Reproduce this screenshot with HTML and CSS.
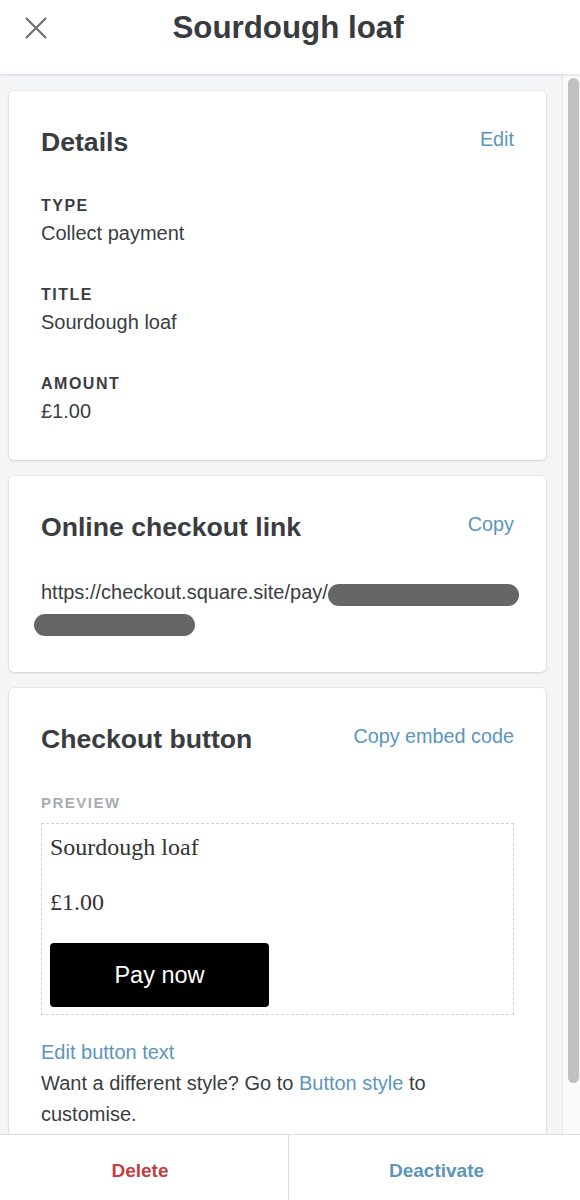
FILE: index.html
```html
<!DOCTYPE html>
<html lang="en">
<head>
<meta charset="utf-8">
<title>Sourdough loaf</title>
<link rel="stylesheet" href="styles.css">
</head>
<body>
<div class="app">
  <header class="topbar">
    <div class="topbar-side">
      <button class="close" aria-label="Close">
        <svg width="22" height="22" viewBox="0 0 22 22" aria-hidden="true">
          <path d="M1 1 L21 21 M21 1 L1 21" fill="none" stroke="#6f6f6f" stroke-width="2.2"/>
        </svg>
      </button>
    </div>
    <h1 class="title">Sourdough loaf</h1>
    <div class="topbar-side"></div>
  </header>

  <div class="viewport">
    <main class="content">
      <section class="card">
        <div class="card-head">
          <h2 class="card-title">Details</h2>
          <a class="link head-link">Edit</a>
        </div>
        <dl class="fields">
          <div class="field"><dt>Type</dt><dd>Collect payment</dd></div>
          <div class="field"><dt>Title</dt><dd>Sourdough loaf</dd></div>
          <div class="field"><dt>Amount</dt><dd>£1.00</dd></div>
        </dl>
      </section>

      <section class="card">
        <div class="card-head">
          <h2 class="card-title">Online checkout link</h2>
          <a class="link head-link">Copy</a>
        </div>
        <p class="url">
          <span class="url-line">https://checkout.square.site/pay/<span class="redact redact-a"></span></span>
          <span class="url-line"><span class="redact redact-b"></span></span>
        </p>
      </section>

      <section class="card">
        <div class="card-head">
          <h2 class="card-title">Checkout button</h2>
          <a class="link head-link">Copy embed code</a>
        </div>
        <div class="preview-label">Preview</div>
        <div class="preview">
          <div class="preview-name">Sourdough loaf</div>
          <div class="preview-price">£1.00</div>
          <button class="pay">Pay now</button>
        </div>
        <a class="link edit-text">Edit button text</a>
        <p class="hint"><span>Want a different style? Go to </span><a class="link">Button style</a><span> to customise.</span></p>
      </section>
    </main>
    <div class="scrollbar"><div class="thumb"></div></div>
  </div>

  <footer class="actions">
    <button class="action danger">Delete</button>
    <button class="action">Deactivate</button>
  </footer>
</div>
</body>
</html>
```

FILE: styles.css
```css
* { box-sizing: border-box; }

html, body {
  margin: 0;
  padding: 0;
  background: #ffffff;
}

body {
  font-family: "Liberation Sans", Arial, sans-serif;
  color: #393c40;
}

.app {
  width: 580px;
  height: 1200px;
  display: flex;
  flex-direction: column;
  overflow: hidden;
}

/* Header */
.topbar {
  flex: none;
  height: 74px;
  display: grid;
  grid-template-columns: 1fr auto 1fr;
  align-items: start;
  padding: 8px 4px 0 0;
  background: #ffffff;
  box-shadow: 0 1px 3px rgba(0, 0, 0, 0.14);
  position: relative;
  z-index: 2;
}

.close {
  margin: 9px 0 0 25px;
  padding: 0;
  border: none;
  background: none;
  width: 22px;
  height: 22px;
  display: block;
}

.close svg { display: block; }

.title {
  margin: 0;
  font-size: 31.3px;
  line-height: 40px;
  font-weight: 700;
  color: #383b3f;
}

/* Scroll region */
.viewport {
  flex: 1;
  display: flex;
  min-height: 0;
  background: #f4f5f7;
}

.content {
  flex: 1;
  min-width: 0;
  overflow: hidden;
  padding: 17px 16px 0 9px;
  display: flex;
  flex-direction: column;
  gap: 16px;
}

.scrollbar {
  flex: none;
  width: 18px;
  border-left: 1px solid #e4e5e7;
  background: #fafafa;
  padding: 4px 1px 0 5px;
}

.thumb {
  width: 11px;
  height: 1005px;
  border-radius: 6px;
  background: #c1c1c1;
}

/* Cards */
.card {
  flex: none;
  background: #ffffff;
  border-radius: 5px;
  box-shadow: 0 1px 3px rgba(0, 0, 0, 0.13), 0 0 0 1px rgba(0, 0, 0, 0.03);
  padding: 35px 32px 35px 32px;
}

.card-head {
  display: flex;
  justify-content: space-between;
  align-items: flex-start;
}

.card-title {
  margin: 0;
  font-size: 26.6px;
  line-height: 32px;
  font-weight: 700;
  color: #393c40;
}

.link {
  color: #5b95bd;
  text-decoration: none;
}

.head-link {
  font-size: 19.8px;
  line-height: 24px;
  margin-top: 1px;
}

/* Details fields */
.fields {
  margin: 38px 0 0 0;
  display: flex;
  flex-direction: column;
  gap: 38px;
}

.field dt {
  font-size: 16px;
  line-height: 20px;
  font-weight: 700;
  letter-spacing: 1.5px;
  text-transform: uppercase;
  color: #3a3d41;
  margin-bottom: 3px;
}

.field dd {
  margin: 0;
  font-size: 20px;
  line-height: 28px;
  color: #3a3d41;
}

/* Checkout link */
.url {
  margin: 34px 0 0 0;
  font-size: 20px;
  line-height: 30px;
  color: #3a3d41;
}

.url-line {
  display: block;
  white-space: nowrap;
}

.redact {
  display: inline-block;
  height: 22px;
  border-radius: 11px;
  background: #666666;
  vertical-align: -7px;
}

.redact-a { width: 191px; }

.redact-b {
  width: 161px;
  margin-left: -7px;
}

/* Checkout button preview */
.preview-label {
  margin-top: 38px;
  font-size: 15px;
  line-height: 20px;
  font-weight: 700;
  letter-spacing: 1.5px;
  text-transform: uppercase;
  color: #a9adb2;
}

.preview {
  margin-top: 10px;
  border: 1px dashed #d2d3d5;
  padding: 8px 8px 7px 8px;
  font-family: "Liberation Serif", "Times New Roman", serif;
  color: #333333;
}

.preview-name,
.preview-price {
  font-size: 24px;
  line-height: 30px;
}

.preview-price { margin-top: 25px; }

.pay {
  display: block;
  margin-top: 26px;
  width: 219px;
  height: 64px;
  border: none;
  border-radius: 4px;
  background: #000000;
  color: #ffffff;
  font-family: "Liberation Sans", Arial, sans-serif;
  font-size: 23.5px;
  padding: 0;
}

.edit-text {
  display: block;
  margin-top: 22px;
  font-size: 20px;
  line-height: 31px;
}

.hint {
  margin: 0;
  font-size: 20px;
  line-height: 31px;
  color: #3a3d41;
}

/* Bottom actions */
.actions {
  flex: none;
  height: 66px;
  display: grid;
  grid-template-columns: 289px 1fr;
  border-top: 1px solid #dcdddf;
  background: #ffffff;
  position: relative;
  z-index: 2;
}

.action {
  border: none;
  background: #ffffff;
  font-family: "Liberation Sans", Arial, sans-serif;
  font-size: 19px;
  line-height: 24px;
  font-weight: 700;
  color: #5b95bd;
  padding: 24px 0 0 0;
  display: flex;
  justify-content: center;
  align-items: flex-start;
}

.action.danger {
  color: #c2403f;
  border-right: 1px solid #dcdddf;
  padding-right: 8px;
}

.action:not(.danger) {
  padding-left: 4px;
}
```
